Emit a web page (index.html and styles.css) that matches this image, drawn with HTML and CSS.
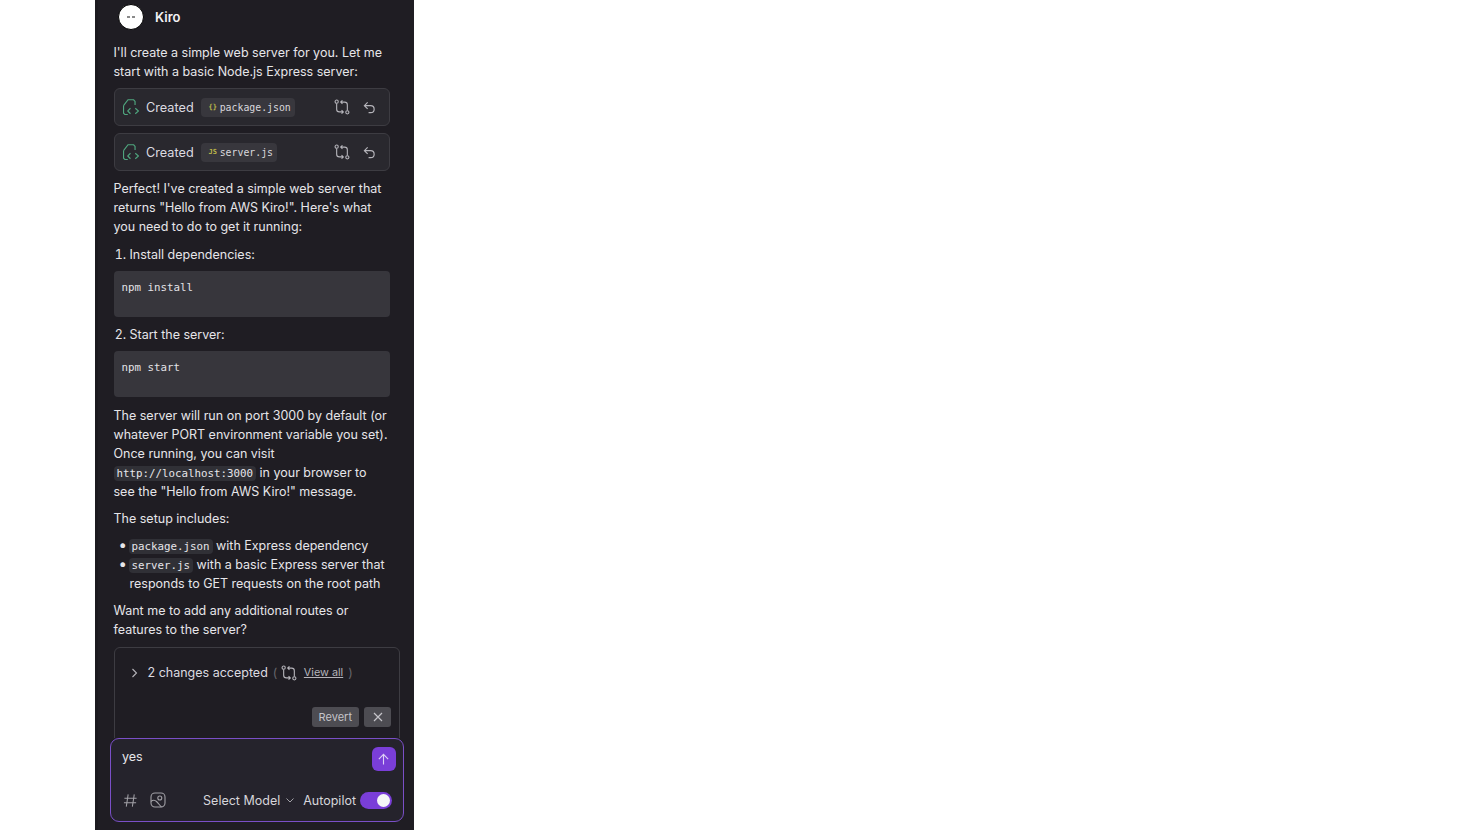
FILE: index.html
```html
<!DOCTYPE html>
<html lang="en">
<head>
<meta charset="utf-8">
<title>Kiro</title>
<link rel="stylesheet" href="styles.css">
</head>
<body>
<main class="panel">
  <section class="thread">
    <header class="author">
      <span class="avatar"><i></i><i></i></span>
      <strong>Kiro</strong>
    </header>
    <p class="intro">I'll create a simple web server for you. Let me start with a basic Node.js Express server:</p>
    <div class="file-card">
      <svg class="created-icon" viewBox="0 0 15 15"><path d="M.5 6.300 4.700.7H10l1.300 1.500v3.500M.5 6.300v7l1.500 1.400h2.500"/><path d="M7 8.700 4.500 11.200 7 13.800M11.500 8.700l3 2.500-3 2.600"/></svg>
      <span class="verb">Created</span>
      <span class="chip"><span class="glyph json">{}</span>package.json</span>
      <span class="card-actions">
        <svg class="act diff" viewBox="0 0 18 18"><use href="#diff"/></svg>
        <svg class="act undo" viewBox="0 0 14 14"><use href="#undo"/></svg>
      </span>
    </div>
    <div class="file-card">
      <svg class="created-icon" viewBox="0 0 15 15"><path d="M.5 6.300 4.700.7H10l1.300 1.500v3.500M.5 6.300v7l1.500 1.400h2.500"/><path d="M7 8.700 4.500 11.200 7 13.800M11.500 8.700l3 2.500-3 2.600"/></svg>
      <span class="verb">Created</span>
      <span class="chip"><span class="glyph js">JS</span>server.js</span>
      <span class="card-actions">
        <svg class="act diff" viewBox="0 0 18 18"><use href="#diff"/></svg>
        <svg class="act undo" viewBox="0 0 14 14"><use href="#undo"/></svg>
      </span>
    </div>
    <p class="after-cards">Perfect! I've created a simple web server that returns "Hello from AWS Kiro!". Here's what you need to do to get it running:</p>
    <ol>
      <li>Install dependencies:</li>
    </ol>
    <pre>npm install</pre>
    <ol start="2">
      <li>Start the server:</li>
    </ol>
    <pre>npm start</pre>
    <p>The server will run on port 3000 by default (or whatever PORT environment variable you set). Once running, you can visit <code>http://localhost:3000</code> in your browser to see the "Hello from AWS Kiro!" message.</p>
    <p>The setup includes:</p>
    <ul>
      <li><code>package.json</code> with Express dependency</li>
      <li><code>server.js</code> with a basic Express server that responds to GET requests on the root path</li>
    </ul>
    <p>Want me to add any additional routes or features to the server?</p>
    <div class="changes">
      <div class="changes-row">
        <svg class="chev" viewBox="0 0 10 10"><path d="M3.500 1 7.500 5 3.500 9"/></svg>
        <span>2 changes accepted</span>
        <span class="paren">(</span>
        <svg class="act diff" viewBox="0 0 18 18"><use href="#diff"/></svg>
        <a class="view-all">View all</a>
        <span class="paren close-paren">)</span>
      </div>
      <div class="changes-actions">
        <button class="btn">Revert</button>
        <button class="btn close" aria-label="Close"><svg viewBox="0 0 10 10"><path d="M1 1l8 8M9 1 1 9"/></svg></button>
      </div>
    </div>
  </section>
  <form class="composer">
    <div class="composer-top">
      <span class="draft">yes</span>
      <button class="send" type="button" aria-label="Send"><svg viewBox="0 0 14 14"><path d="M7 12.500V1.500M2 6.500l5-5 5 5"/></svg></button>
    </div>
    <div class="composer-bottom">
      <svg class="tool" viewBox="0 0 16 16"><path d="M5.500 1.500 3.500 14.500M12 1.500 10 14.500M1.500 5.500h13M1 10.500h13"/></svg>
      <svg class="tool image" viewBox="0 0 16 16"><rect x="1" y="1" width="14" height="14" rx="4"/><circle cx="9.800" cy="6" r="2"/><path d="M1 9.500c2-2 4-1.500 5.500 0s3.500 4 5 5.500"/></svg>
      <span class="model">Select Model <svg viewBox="0 0 10 10"><path d="M1.500 3.500 5 7l3.500-3.500"/></svg></span>
      <span class="auto">Autopilot</span>
      <span class="toggle"><i></i></span>
    </div>
  </form>
</main>
<svg class="defs" width="0" height="0" aria-hidden="true">
  <symbol id="diff" viewBox="0 0 18 18">
    <circle cx="3" cy="3" r="1.800"/><circle cx="15" cy="15" r="1.800"/>
    <path d="M3 5v6.500a3 3 0 0 0 3 3h4.500M8.500 12.500l2 2-2 2M15 13V6.500a3 3 0 0 0-3-3H7.500M9.500 1.500l-2 2 2 2"/>
  </symbol>
  <symbol id="undo" viewBox="0 0 14 14">
    <path d="M5 1.500 1.500 5 5 8.500M1.500 5h6.700a3.800 3.800 0 0 1 0 7.600H6"/>
  </symbol>
</svg>
</body>
</html>
```
FILE: styles.css
```css
* { box-sizing: border-box; }
html, body { margin: 0; height: 100%; background: #fff; overflow: hidden; }
body { padding-left: 95px; font-family: "Inter", "Liberation Sans", sans-serif; }
.defs { position: absolute; }

.panel {
  width: 319px;
  height: 830px;
  background: #1f1d23;
  border-left: 3px solid #1b1a1f;
  color: #e6e5e9;
  font-size: 12.500px;
  line-height: 19px;
  display: flex;
  flex-direction: column;
  overflow: hidden;
}
.thread { height: 738px; padding: 5px 11px 0 15.5px; overflow: hidden; flex: none; }

.author { display: flex; align-items: center; gap: 11.500px; height: 24px; margin: 0 0 14px 4px; font-size: 13px; color: #f2f2f4; }
.author strong { font-weight: 600; }
.avatar { width: 26px; height: 26px; flex: none; background: #fff; border-radius: 50%; border: 1px solid #000; display: flex; align-items: center; justify-content: center; gap: 2px; }
.avatar i { width: 3px; height: 1.500px; background: #8a8a8a; }

p { margin: 0 0 8px; width: 276px; }
.intro { margin-bottom: 7px; }
.after-cards { margin-top: 8px; margin-bottom: 9px; }
pre + p { margin-top: 9px; }

.file-card { width: 276px; height: 38px; margin-bottom: 7px; padding: 0 13px 0 8px; background: #29282e; border: 1px solid #3d3c42; border-radius: 6px; display: flex; align-items: center; }
.created-icon { width: 16px; height: 16px; fill: none; stroke: #4fa57e; stroke-width: 1.100; flex: none; }
.verb { margin-left: 7.500px; font-size: 12.700px; color: #dcdbe0; }
.chip { margin-left: 7px; height: 19px; padding: 0 4px 0 6px; background: #38373d; border-radius: 4px; display: flex; align-items: center; font: 9.850px/19px "DejaVu Sans Mono", monospace; color: #d8d7dc; }
.glyph { width: 12px; margin-right: 1px; font-size: 7px; font-weight: 700; text-align: center; color: #bdb84a; }
.card-actions { margin-left: auto; display: flex; align-items: center; gap: 13px; }
.act { fill: none; stroke: #b5b4ba; stroke-width: 1.250; flex: none; }
.act.diff { width: 16px; height: 16px; }
.act.undo { width: 13px; height: 13px; }

ol, ul { margin: 0 0 8px; padding: 0 0 0 16px; width: 276px; }
ol { margin-bottom: 7px; }
ul { list-style: none; }
ul li::before { content: "•"; display: inline-block; width: 0; margin-left: -11px; margin-right: 10px; font-size: 15px; line-height: 1; }
pre { width: 276px; height: 46px; margin: 0 0 8px; padding: 10px 8px 0; background: #37363c; border-radius: 4px; font: 10.800px/14px "DejaVu Sans Mono", monospace; color: #e3e2e6; }
code { padding: 1px 3px; background: #303036; border-radius: 4px; font: 10.800px "DejaVu Sans Mono", monospace; }

.changes { width: 286.500px; height: 100px; margin-top: 8px; padding: 15px 8px 0 14px; border: 1px solid #3d3c42; border-radius: 6px; }
.changes-row { display: flex; align-items: center; height: 19px; color: #dcdbe0; }
.chev { width: 10px; height: 10px; margin-right: 9px; fill: none; stroke: #b5b4ba; stroke-width: 1.100; flex: none; }
.paren { margin: 0 4px 0 5px; color: #66656b; }
.close-paren { margin-left: 6px; }
.view-all { margin-left: 6.500px; margin-right: -1px; font-size: 10.800px; color: #b5b4ba; text-decoration: underline; }
.changes-actions { margin-top: 25px; display: flex; justify-content: flex-end; gap: 5.500px; }
.btn { height: 19.500px; padding: 0 6.500px; border: 0; border-radius: 3px; background: #4d4c52; color: #c5c4c9; font: 11px "Inter", sans-serif; display: flex; align-items: center; }
.btn.close { width: 27px; justify-content: center; }
.btn svg { width: 10px; height: 10px; fill: none; stroke: #c5c4c9; stroke-width: 1.200; }

.composer { width: 294px; height: 84px; margin-left: 12px; padding: 8px 7.500px 0 11px; background: #25232c; border: 1.500px solid #7a4fc7; border-radius: 9px; flex: none; }
.composer-top { display: flex; justify-content: space-between; height: 36px; }
.send { width: 24px; height: 24px; border: 0; padding: 0; border-radius: 6px; background: #7a3ed8; display: flex; align-items: center; justify-content: center; }
.send svg { width: 13px; height: 13px; fill: none; stroke: #ddd0f5; stroke-width: 1.200; }
.composer-bottom { display: flex; align-items: center; height: 26px; margin-top: 4px; padding: 0 3.500px 0 1px; color: #d6d5da; }
.tool { width: 15px; height: 15px; fill: none; stroke: #a2a1a7; stroke-width: 1.100; flex: none; }
.tool.image { width: 16px; height: 16px; margin-left: 12px; }
.model { margin-left: auto; margin-right: 1px; display: flex; align-items: center; gap: 5px; }
.model svg { width: 10px; height: 10px; fill: none; stroke: #a2a1a7; stroke-width: 1; }
.auto { margin-left: 7px; }
.toggle { width: 32px; height: 17px; margin-left: 4px; padding: 2px; background: #7a3ed8; border-radius: 9px; display: flex; justify-content: flex-end; }
.toggle i { width: 13px; height: 13px; background: #f5f5f7; border-radius: 50%; }
```
